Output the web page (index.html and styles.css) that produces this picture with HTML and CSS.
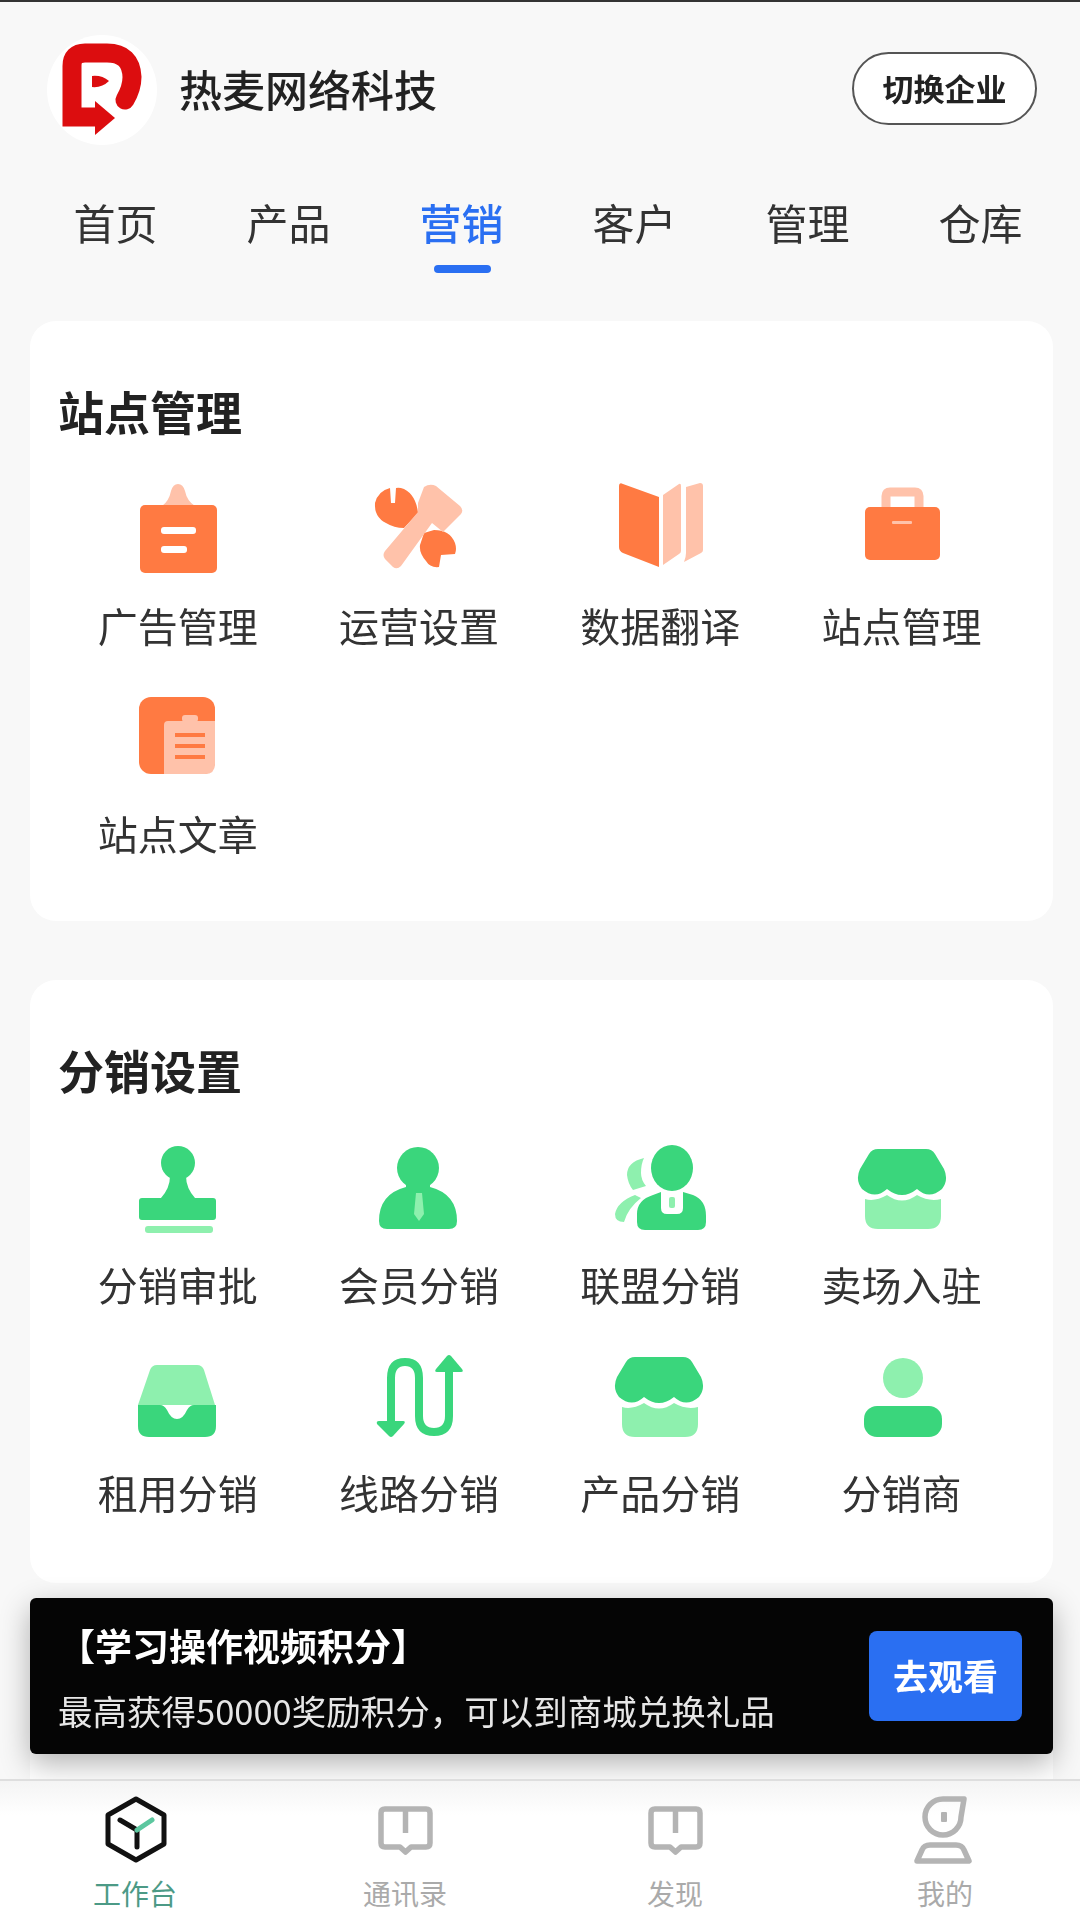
FILE: index.html
```html
<html lang="zh-CN">
<head>
<title>工作台</title>
<link rel="stylesheet" href="styles.css">
</head>
<body>
<svg class="defs" width="0" height="0">
  <symbol id="shop" viewBox="0 0 90 90">
    <path class="dark" d="M21 7H69Q75 7 78 12L87 27Q92 38 85 47Q72 58 60 47Q45 59 30 47Q18 58 5 47Q-2 38 3 27L12 12Q15 7 21 7Z"/>
    <path class="light" d="M8 57Q18 60 30 53Q45 64 60 53Q72 60 84 57V74Q84 87 71 87H21Q8 87 8 74Z"/>
  </symbol>
</svg>

<div class="app">
  <div class="main">
    <header class="head">
      <div class="logo">
        <svg width="110" height="110" viewBox="0 0 110 110">
          <path class="logo-line" d="M78 65Q85 53 85 42Q84 18 60 18H38Q25 18 25 31V82H50"/>
          <path class="logo-fill" d="M48 66L68 83L48 100Z"/>
          <path class="logo-fill" d="M45 41Q55 40 62 46Q55 53 45 52Z"/>
        </svg>
      </div>
      <div class="company">热麦网络科技</div>
      <div class="switch">切换企业</div>
    </header>

    <nav class="tabs">
      <div class="tab">首页</div>
      <div class="tab">产品</div>
      <div class="tab active">营销</div>
      <div class="tab">客户</div>
      <div class="tab">管理</div>
      <div class="tab">仓库</div>
    </nav>

    <section class="card">
      <h2>站点管理</h2>
      <div class="grid">
        <div class="item">
          <svg class="ico orange" viewBox="0 0 90 90">
            <path class="light" d="M29 23Q36 18 38 8Q40 1 45 1Q50 1 52 8Q54 18 62 23Z"/>
            <rect class="dark" x="7" y="22" width="77" height="68" rx="5"/>
            <rect class="paper" x="28" y="44" width="35" height="7" rx="3"/>
            <rect class="paper" x="28" y="63" width="26" height="7" rx="3"/>
          </svg>
          <span>广告管理</span>
        </div>
        <div class="item">
          <svg class="ico orange" viewBox="0 0 90 90">
            <path class="dark" d="M16 5Q4 8 1 20Q0 34 12 40Q20 45 30 45L44 30Q42 12 30 6Q25 4 22 5L21 20H17Z"/>
            <path class="dark" d="M60 47Q76 47 81 60Q83 66 81 71L67 72L65 84Q56 85 52 78Q45 70 46 62L50 50Z"/>
            <path class="light" d="M50 4Q56 0 62 3L86 23Q90 27 87 31L69 49L58 40L27 83Q23 87 19 84L11 76Q8 72 11 68L44 29L44 20Z"/>
          </svg>
          <span>运营设置</span>
        </div>
        <div class="item">
          <svg class="ico orange" viewBox="0 0 90 90">
            <path class="dark" d="M4 3Q4 -1 8 1L44 14V84L8 70Q4 68 4 64Z"/>
            <path class="light" d="M48 12L64 1Q66 0 66 3V68Q66 70 64 71L48 82Z"/>
            <path class="light" d="M71 4L85 0Q88 0 88 3V67Q88 69 86 70L69 79Q71 74 71 70Z"/>
          </svg>
          <span>数据翻译</span>
        </div>
        <div class="item">
          <svg class="ico orange" viewBox="0 0 90 90">
            <path class="light-line" d="M29 26V13Q29 9 33 9H58Q62 9 62 13V26"/>
            <rect class="dark" x="8" y="24" width="75" height="53" rx="5"/>
            <rect class="light" x="35" y="38" width="20" height="3" rx="1"/>
          </svg>
          <span>站点管理</span>
        </div>
        <div class="item">
          <svg class="ico orange" viewBox="0 0 90 90">
            <rect class="dark" x="6" y="6" width="76" height="77" rx="12"/>
            <path class="light" d="M35 30H82V73Q82 83 72 83H31V34Q31 30 35 30Z"/>
            <rect class="light" x="49" y="24" width="16" height="7" rx="3"/>
            <path class="dark-line" d="M42 44H72M42 55H72M42 66H72"/>
          </svg>
          <span>站点文章</span>
        </div>
      </div>
    </section>

    <section class="card">
      <h2>分销设置</h2>
      <div class="grid">
        <div class="item">
          <svg class="ico green" viewBox="0 0 90 90">
            <circle class="dark" cx="45" cy="21" r="17"/>
            <path class="dark" d="M37 34H53Q53 46 62 56H80Q83 56 83 59V75Q83 78 80 78H9Q6 78 6 75V59Q6 56 9 56H28Q37 46 37 34Z"/>
            <rect class="light" x="12" y="84" width="68" height="7" rx="3"/>
          </svg>
          <span>分销审批</span>
        </div>
        <div class="item">
          <svg class="ico green" viewBox="0 0 90 90">
            <circle class="dark" cx="44" cy="26" r="21"/>
            <path class="dark" d="M32 42H56V45Q83 52 83 79Q83 87 75 87H13Q5 87 5 79Q5 52 32 45Z"/>
            <path class="light" d="M42 51H48L50 72L45 79L40 72Z"/>
          </svg>
          <span>会员分销</span>
        </div>
        <div class="item">
          <svg class="ico green" viewBox="0 0 90 90">
            <path class="light" d="M29 16Q12 20 12 33Q13 42 18 48L31 44Q26 38 26 31Q26 22 29 16Z"/>
            <path class="light" d="M20 53Q2 60 0 72Q0 80 9 80Q13 66 26 56Z"/>
            <ellipse class="dark" cx="57" cy="26" rx="21" ry="23"/>
            <path class="dark" d="M38 53L46 50V66Q46 72 52 72H62Q68 72 68 66V50L78 53Q91 58 91 74V80Q91 88 83 88H30Q22 88 22 80V72Q22 58 38 53Z"/>
            <rect class="light" x="54" y="55" width="6" height="11" rx="2"/>
          </svg>
          <span>联盟分销</span>
        </div>
        <div class="item">
          <svg class="ico green" viewBox="0 0 90 90"><use href="#shop"/></svg>
          <span>卖场入驻</span>
        </div>
        <div class="item">
          <svg class="ico green" viewBox="0 0 90 90">
            <path class="light" d="M24 15H64Q69 15 71 20L82 55H5L17 20Q19 15 24 15Z"/>
            <path class="dark" d="M5 55H27Q31 55 34 60Q38 69 44 69Q50 69 54 60Q57 55 61 55H83V76Q83 87 72 87H16Q5 87 5 76Z"/>
          </svg>
          <span>租用分销</span>
        </div>
        <div class="item">
          <svg class="ico green" viewBox="0 0 90 90">
            <path class="dark-line wide" d="M17 76V28Q17 12 31 12Q45 12 45 28V66Q45 82 60 82Q75 82 75 66V18"/>
            <path class="dark" d="M5 71H29Q32 71 30 74L19 86Q17 88 15 86L3 74Q2 71 5 71Z"/>
            <path class="dark" d="M63 22H87Q90 22 88 19L77 6Q75 4 73 6L62 19Q60 22 63 22Z"/>
          </svg>
          <span>线路分销</span>
        </div>
        <div class="item">
          <svg class="ico green" viewBox="0 0 90 90"><use href="#shop" x="-1"/></svg>
          <span>产品分销</span>
        </div>
        <div class="item">
          <svg class="ico green" viewBox="0 0 90 90">
            <circle class="light" cx="46" cy="28" r="20"/>
            <rect class="dark" x="7" y="56" width="78" height="31" rx="13"/>
          </svg>
          <span>分销商</span>
        </div>
      </div>
    </section>

    <section class="card more">
      <h2>营销工具</h2>
    </section>

    <div class="notice">
      <div class="notice-text">
        <div class="notice-title">【学习操作视频积分】</div>
        <div class="notice-sub">最高获得50000奖励积分，可以到商城兑换礼品</div>
      </div>
      <div class="notice-btn">去观看</div>
    </div>
  </div>

  <footer class="bar">
    <div class="bar-item on">
      <svg width="70" height="70" viewBox="0 0 70 70">
        <path class="hex" d="M36 4L64 20V49L36 65L8 49V20Z"/>
        <path class="hex" d="M20 25L37 35V52"/>
        <path class="hex-green" d="M37 35L52 25"/>
      </svg>
      <span>工作台</span>
    </div>
    <div class="bar-item">
      <svg width="70" height="70" viewBox="0 0 70 70">
        <path class="gray" d="M35.5 14H15Q11 14 11 18V48Q11 52 15 52H30L35.5 57L41 52H56Q60 52 60 48V18Q60 14 56 14Z"/>
        <path class="gray" d="M35.5 14V38"/>
      </svg>
      <span>通讯录</span>
    </div>
    <div class="bar-item">
      <svg width="70" height="70" viewBox="0 0 70 70">
        <path class="gray" d="M35.5 14H15Q11 14 11 18V48Q11 52 15 52H30L35.5 57L41 52H56Q60 52 60 48V18Q60 14 56 14Z"/>
        <path class="gray" d="M35.5 14V38"/>
      </svg>
      <span>发现</span>
    </div>
    <div class="bar-item">
      <svg width="70" height="70" viewBox="0 0 70 70">
        <path class="gray" d="M33 4A18 18 0 1 0 51 22L54 4Z"/>
        <rect class="gray-fill" x="31" y="17" width="6" height="10" rx="1"/>
        <path class="gray" d="M20 50H46Q52 50 54 55L59 66H7L12 55Q14 50 20 50Z"/>
      </svg>
      <span>我的</span>
    </div>
  </footer>
</div>
</body>
</html>
```

FILE: styles.css
```css
* {
  box-sizing: border-box;
}

html,
body {
  margin: 0;
  height: 1920px;
  overflow: hidden;
}

body {
  font-family: "Noto Sans CJK SC", "Noto Sans", sans-serif;
  color: #333;
  background: #f8f8f8;
}

.defs {
  position: absolute;
}

.app {
  height: 1920px;
  display: flex;
  flex-direction: column;
  border-top: 2px solid #333;
  filter: blur(0.6px);
}

.main {
  position: relative;
  flex: 1;
  overflow: hidden;
}

/* header */
.head {
  height: 176px;
  display: flex;
  align-items: center;
  padding: 0 43px 0 47px;
}

.logo {
  width: 110px;
  height: 110px;
  border-radius: 50%;
  background: #fff;
}

.logo-line {
  fill: none;
  stroke: #dc0d0f;
  stroke-width: 19;
  stroke-linecap: round;
}

.logo-fill {
  fill: #dc0d0f;
}

.company {
  flex: 1;
  margin: -5px 0 0 22px;
  font-size: 43px;
  font-weight: 500;
  color: #222;
}

.switch {
  width: 185px;
  height: 73px;
  margin-top: -3px;
  padding-bottom: 2px;
  display: flex;
  align-items: center;
  justify-content: center;
  font-size: 31px;
  font-weight: 700;
  color: #222;
  background: #fff;
  border: 2px solid #555;
  border-radius: 37px;
}

/* tabs */
.tabs {
  display: grid;
  grid-template-columns: repeat(6, 173px);
  padding-left: 29px;
  margin-top: 16px;
}

.tab {
  height: 79px;
  text-align: center;
  font-size: 42px;
  line-height: 56px;
}

.tab.active {
  position: relative;
  color: #2a6ff2;
  font-weight: 500;
}

.tab.active::after {
  content: "";
  position: absolute;
  left: 59px;
  bottom: 0;
  width: 57px;
  height: 8px;
  border-radius: 4px;
  background: #2a6ff2;
}

/* cards */
.card {
  margin: 48px 27px 0 30px;
  padding: 59px 28px 60px 27px;
  background: #fff;
  border-radius: 26px;
}

.card + .card {
  margin-top: 59px;
  padding-bottom: 63px;
}

.card.more {
  padding-top: 55px;
}

h2 {
  margin: 0 0 43px 1px;
  font-size: 46px;
  line-height: 60px;
  font-weight: 700;
  color: #222;
}

.grid {
  display: grid;
  grid-template-columns: repeat(4, 241.3px);
  row-gap: 38px;
}

.item {
  display: flex;
  flex-direction: column;
  align-items: center;
  font-size: 40px;
  line-height: 56px;
  color: #333;
}

.ico {
  display: block;
  width: 90px;
  height: 90px;
  margin-bottom: 24px;
  overflow: visible;
}

.orange {
  --dark: #ff7a42;
  --light: #ffc2aa;
}

.green {
  --dark: #3ad67c;
  --light: #8ef0ae;
}

.dark {
  fill: var(--dark);
}

.light {
  fill: var(--light);
}

.paper {
  fill: #fff;
}

.light-line {
  fill: none;
  stroke: var(--light);
  stroke-width: 9;
}

.dark-line {
  fill: none;
  stroke: var(--dark);
  stroke-width: 4;
}

.dark-line.wide {
  stroke-width: 8;
}

/* notice over the list */
.notice {
  position: absolute;
  left: 30px;
  right: 27px;
  bottom: 25px;
  height: 156px;
  display: flex;
  align-items: center;
  justify-content: space-between;
  padding: 0 31px 0 28px;
  background: #050505;
  border-radius: 6px;
  box-shadow: 0 10px 30px rgba(0, 0, 0, 0.3);
}

.notice-text {
  color: #fff;
  padding-top: 3px;
}

.notice-title {
  font-size: 37px;
  line-height: 50px;
  font-weight: 700;
}

.notice-sub {
  margin-top: 15px;
  font-size: 34.5px;
  line-height: 50px;
  color: #e6e6e6;
}

.notice-btn {
  width: 153px;
  height: 90px;
  padding-bottom: 3px;
  display: flex;
  align-items: center;
  justify-content: center;
  font-size: 35px;
  font-weight: 700;
  color: #fff;
  background: #2a6ff2;
  border-radius: 8px;
}

/* bottom bar */
.bar {
  height: 141px;
  flex-shrink: 0;
  display: grid;
  grid-template-columns: repeat(4, 270px);
  padding-top: 14px;
  border-top: 2px solid #dedede;
  background: linear-gradient(#f4f4f4, #fff 34px);
}

.bar-item {
  display: flex;
  flex-direction: column;
  align-items: center;
  font-size: 28px;
  line-height: 36px;
  color: #aaa;
}

.bar-item svg {
  display: block;
  margin-bottom: 10px;
}

.bar-item.on {
  color: #4c9a86;
}

.hex {
  fill: none;
  stroke: #111;
  stroke-width: 5;
  stroke-linejoin: round;
  stroke-linecap: round;
}

.hex-green {
  fill: none;
  stroke: #5cc79f;
  stroke-width: 5;
  stroke-linecap: round;
}

.gray {
  fill: none;
  stroke: #b4b4b4;
  stroke-width: 5.5;
  stroke-linejoin: round;
}

.gray-fill {
  fill: #b4b4b4;
}
```
